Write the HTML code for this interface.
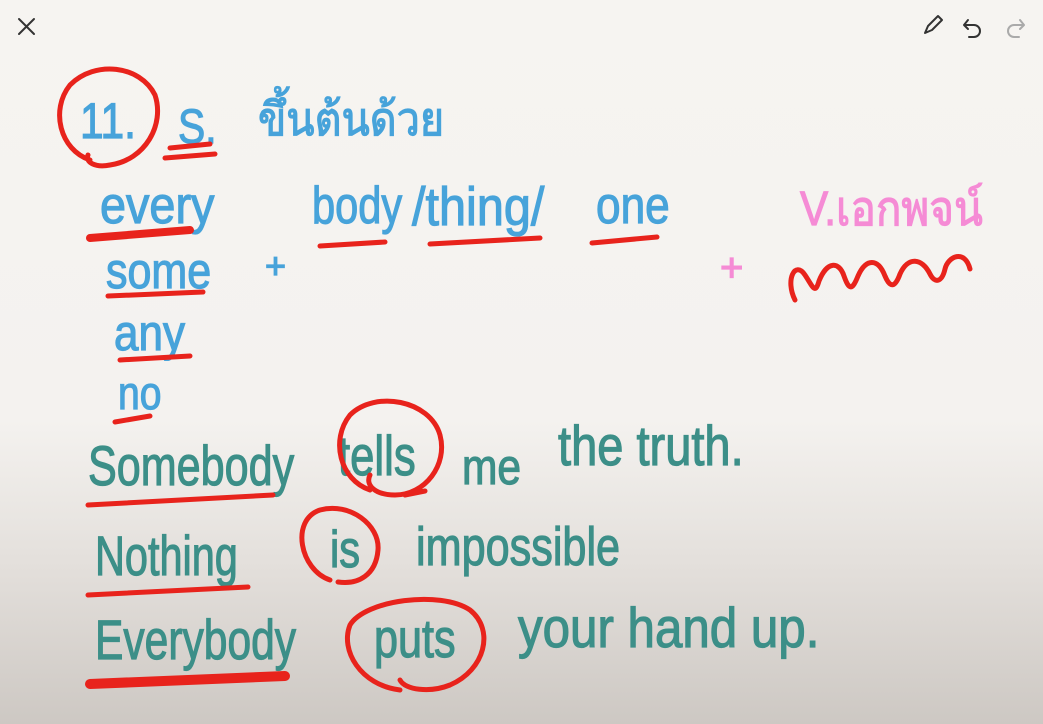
<!DOCTYPE html>
<html><head><meta charset="utf-8"><style>
html,body{margin:0;padding:0}
body{width:1043px;height:724px;overflow:hidden;position:relative;
background:linear-gradient(to bottom,#f6f4f1 0px,#f4f2ef 420px,#e4e0dc 560px,#cdc8c3 724px);
font-family:"Liberation Sans","Noto Sans CJK SC",sans-serif}
.t{position:absolute;white-space:nowrap;line-height:1;transform-origin:0 0;-webkit-text-stroke:1.2px currentColor}
.b{color:#47a3da}.g{color:#3c8f88}.p{color:#f58bd5}
svg{position:absolute;left:0;top:0}
</style></head><body>
<div class="t b" style="left:80px;top:96px;font-size:50px;transform:scaleX(.85)">11.</div>
<div class="t b" style="left:178px;top:104px;font-size:48px;transform:scaleX(.85)">S.</div>
<div class="t b" style="left:258px;top:96px;font-size:46px;transform:scaleX(.9)">ขึ้นต้นด้วย</div>
<div class="t b" style="left:100px;top:180px;font-size:52px;transform:scaleX(.9)">every</div>
<div class="t b" style="left:106px;top:246px;font-size:50px;transform:scaleX(.86)">some</div>
<div class="t b" style="left:114px;top:308px;font-size:50px;transform:scaleX(.88)">any</div>
<div class="t b" style="left:118px;top:370px;font-size:46px;transform:scaleX(.85)">no</div>
<div class="t b" style="left:265px;top:248px;font-size:36px">+</div>
<div class="t b" style="left:312px;top:180px;font-size:52px;transform:scaleX(.8)">body</div>
<div class="t b" style="left:412px;top:180px;font-size:54px;transform:scaleX(.9)">/thing/</div>
<div class="t b" style="left:596px;top:180px;font-size:52px;transform:scaleX(.85)">one</div>
<div class="t p" style="left:800px;top:186px;font-size:48px;transform:scaleX(.88)">V.เอกพจน์</div>
<div class="t p" style="left:720px;top:248px;font-size:40px">+</div>
<div class="t g" style="left:88px;top:438px;font-size:56px;transform:scaleX(.77)">Somebody</div>
<div class="t g" style="left:338px;top:428px;font-size:56px;transform:scaleX(.78)">tells</div>
<div class="t g" style="left:462px;top:442px;font-size:50px;transform:scaleX(.85)">me</div>
<div class="t g" style="left:558px;top:418px;font-size:56px;transform:scaleX(.84)">the truth.</div>
<div class="t g" style="left:95px;top:528px;font-size:56px;transform:scaleX(.74)">Nothing</div>
<div class="t g" style="left:330px;top:524px;font-size:52px;transform:scaleX(.8)">is</div>
<div class="t g" style="left:416px;top:520px;font-size:54px;transform:scaleX(.8)">impossible</div>
<div class="t g" style="left:95px;top:612px;font-size:56px;transform:scaleX(.76)">Everybody</div>
<div class="t g" style="left:374px;top:612px;font-size:54px;transform:scaleX(.8)">puts</div>
<div class="t g" style="left:518px;top:600px;font-size:56px;transform:scaleX(.88)">your hand up.</div>
<svg width="1043" height="724" fill="none" stroke-linecap="round" stroke-linejoin="round">
<g stroke="#333" stroke-width="2">
<path d="M19 19L34 34M34 19L19 34"/>
<path d="M925 33l3-7 10-10 4 4-10 10z"/>
<path d="M968 20l-4 5 4 4M964 25h10a6 6 0 010 12h-5"/>
</g>
<path stroke="#aaa" stroke-width="2" d="M1020 20l4 5-4 4M1024 25h-10a6 6 0 000 12h5"/>
<g stroke="#e8231c" stroke-width="5">
<path d="M90 160C60 150 50 110 70 85 95 60 140 65 155 95 165 125 145 160 110 165 95 168 85 162 88 155"/>
<path d="M165 158l50-4M170 148l40-4"/>
<path d="M90 238l100-8" stroke-width="8"/>
<path d="M108 296l95-4M120 360l70-4M115 422l35-6M320 246l65-4M430 244l110-6M592 243l65-6"/>
<path d="M795 300c-10-20 0-40 10-25 8 12 10 20 14 6 8-20 20-20 25-5 5 14 8 15 14 0 8-18 20-18 27 0 5 12 10 12 15-2 8-18 22-16 30 0 5 10 12 8 15-5s20-20 25 0"/>
<path d="M88 505l185-10M370 490c-30-10-40-50-20-75 25-25 80-15 90 20 8 30-15 60-45 60-20 0-30-10-25-20M405 495l20-4"/>
<path d="M88 595l160-8M330 580c-30-10-40-60-10-70 30-8 60 15 58 40-2 25-20 35-40 32"/>
<path d="M90 684l195-8" stroke-width="10"/>
<path d="M400 690c-40-5-60-40-50-65 15-25 90-35 120-15 25 20 15 60-20 75-20 8-45 5-50-5"/>
</g>
</svg>
</body></html>
